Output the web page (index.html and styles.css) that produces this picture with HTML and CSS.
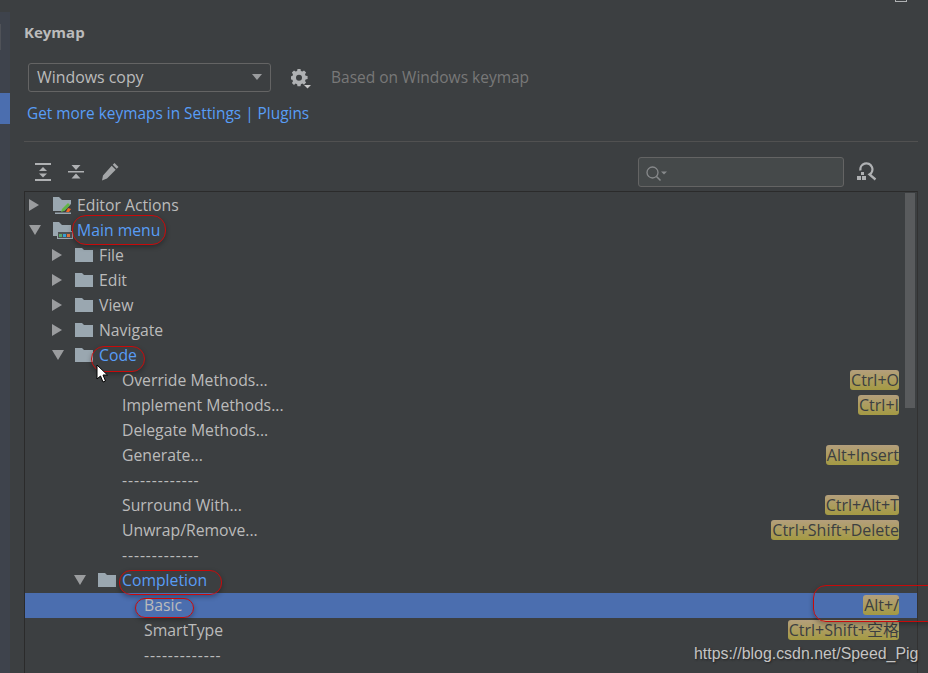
FILE: index.html
```html
<!DOCTYPE html>
<html lang="en">
<head>
<meta charset="utf-8">
<title>Keymap</title>
<link rel="stylesheet" href="styles.css">
</head>
<body>
<div class="window">
  <aside class="sidebar">
    <div class="side-mark"></div>
    <div class="side-sel"></div>
  </aside>
  <main class="panel">
    <h1 class="title">Keymap</h1>
    <div class="scheme-row">
      <div class="combo"><span>Windows copy</span><i class="combo-arrow"></i></div>
      <svg class="gear" width="20" height="20" viewBox="0 0 20 20"><path fill="#afb1b3" fill-rule="evenodd" d="M6.500 0h3l.4 2 1.500.6L13 1.500l2.100 2.100-1.100 1.600.6 1.500 2 .4v3l-2 .4-.6 1.500 1.100 1.600-2.100 2.100-1.600-1.100-1.500.6-.4 2h-3l-.4-2-1.500-.6L3 16l-2.100-2.100L2 12.300l-.6-1.500-2-.4v-3l2-.4.6-1.500L.9 3.600 3 1.500l1.600 1.100 1.500-.6zM8 5.700a3 3 0 1 0 0 6 3 3 0 0 0 0-6z"/><path fill="#c8c8c8" d="M13 16h7l-3.500 3.500z"/></svg>
      <span class="based">Based on Windows keymap</span>
    </div>
    <a class="more-link">Get more keymaps in Settings | Plugins</a>
    <hr class="rule">
    <div class="toolbar">
      <svg class="tool" width="16" height="18" viewBox="0 0 16 18"><g fill="#afb1b3"><rect y="0" width="16" height="2"/><rect y="16" width="16" height="2"/><path d="M8 4l4 4H4zM8 14.500l-4-4h8z"/></g></svg>
      <svg class="tool" width="16" height="18" viewBox="0 0 16 18"><g fill="#afb1b3"><rect y="8" width="16" height="1.500"/><path d="M8 7L3.500 2h9zM8 10.500l4.500 5h-9z"/></g></svg>
      <svg class="tool" width="18" height="18" viewBox="0 0 18 18"><path fill="#a4a6a8" d="M13.500 0l4 4-1.800 1.800-4-4zM10.700 2.800l4 4L6 15.500 1 17.500l1-5z"/></svg>
      <div class="search"><svg width="24" height="16" viewBox="0 0 24 16"><circle cx="6.500" cy="6.500" r="5.500" fill="none" stroke="#87898b" stroke-width="1.300"/><path d="M10.500 10.500l4 4" stroke="#87898b" stroke-width="1.600"/><path fill="#87898b" d="M15 5.500h6l-3 3z"/></svg></div>
      <svg class="find-shortcut" width="20" height="20" viewBox="0 0 20 20"><g fill="#afb1b3"><rect x="4" y="10" width="3" height="3"/><rect x="0" y="14" width="4" height="4"/><rect x="5" y="14" width="4" height="4"/></g><path fill="none" stroke="#afb1b3" stroke-width="2.300" d="M3.500 8.500A6 6 0 1 1 12.500 12.500L18.500 17.500"/></svg>
    </div>
    <section class="tree">
      <div class="scrollbar"></div>
      <div class="row l0"><i class="tri right"></i><svg class="fold" width="20" height="18" viewBox="0 0 20 18"><path fill="#9aa7b0" d="M0 1h6l3 3h9v4l-7 7H0z"/><path fill="#62b543" d="M8 16l1-3 6-6 2 2-6 6z"/><path fill="#f26522" d="M15 12l3 1-2 3h-3z"/><rect x="2" y="16.500" width="16" height="1.500" fill="#9aa7b0"/></svg><span>Editor Actions</span></div>
      <div class="row l0"><i class="tri down"></i><svg class="fold" width="20" height="18" viewBox="0 0 20 18"><path fill="#9aa7b0" d="M0 1h6l3 3h9v6H5v5H0z"/><rect x="4.500" y="10.500" width="15" height="7" fill="#4f5254" stroke="#9aa7b0"/><rect x="6" y="13" width="3" height="3" fill="#59a869"/><rect x="10" y="13" width="3" height="3" fill="#389fd6"/><rect x="14" y="13" width="3" height="3" fill="#e0743c"/></svg><span class="hit">Main menu</span></div>
      <div class="row l1"><i class="tri right"></i><svg class="fold" width="18" height="14" viewBox="0 0 18 14"><path fill="#9aa7b0" d="M0 0h7l2 2h9v12H0z"/></svg><span>File</span></div>
      <div class="row l1"><i class="tri right"></i><svg class="fold" width="18" height="14" viewBox="0 0 18 14"><path fill="#9aa7b0" d="M0 0h7l2 2h9v12H0z"/></svg><span>Edit</span></div>
      <div class="row l1"><i class="tri right"></i><svg class="fold" width="18" height="14" viewBox="0 0 18 14"><path fill="#9aa7b0" d="M0 0h7l2 2h9v12H0z"/></svg><span>View</span></div>
      <div class="row l1"><i class="tri right"></i><svg class="fold" width="18" height="14" viewBox="0 0 18 14"><path fill="#9aa7b0" d="M0 0h7l2 2h9v12H0z"/></svg><span>Navigate</span></div>
      <div class="row l1"><i class="tri down"></i><svg class="fold" width="18" height="14" viewBox="0 0 18 14"><path fill="#9aa7b0" d="M0 0h7l2 2h9v12H0z"/></svg><span class="hit">Code</span></div>
      <div class="row l2"><span>Override Methods...</span><kbd>Ctrl+O</kbd></div>
      <div class="row l2"><span>Implement Methods...</span><kbd>Ctrl+I</kbd></div>
      <div class="row l2"><span>Delegate Methods...</span></div>
      <div class="row l2"><span>Generate...</span><kbd>Alt+Insert</kbd></div>
      <div class="row l2"><span class="sep">-------------</span></div>
      <div class="row l2"><span>Surround With...</span><kbd>Ctrl+Alt+T</kbd></div>
      <div class="row l2"><span>Unwrap/Remove...</span><kbd>Ctrl+Shift+Delete</kbd></div>
      <div class="row l2"><span class="sep">-------------</span></div>
      <div class="row l2b"><i class="tri down"></i><svg class="fold" width="18" height="14" viewBox="0 0 18 14"><path fill="#9aa7b0" d="M0 0h7l2 2h9v12H0z"/></svg><span class="hit">Completion</span></div>
      <div class="row l3 selected"><span>Basic</span><kbd>Alt+/</kbd></div>
      <div class="row l3"><span>SmartType</span><kbd>Ctrl+Shift+空格</kbd></div>
      <div class="row l3"><span class="sep">-------------</span></div>
    </section>
  </main>
</div>
<i class="corner-mark"></i>
<i class="ring ring-main"></i>
<i class="ring ring-code"></i>
<i class="ring ring-completion"></i>
<i class="ring ring-basic"></i>
<i class="ring ring-alt"></i>
<svg class="cursor" width="14" height="20" viewBox="0 0 14 20"><path fill="#fff" stroke="#000" d="M1 1v14l3.500-3 2.500 6 2.500-1-2.500-6h4.500z"/></svg>
<span class="watermark">https://blog.csdn.net/Speed_Pig</span>
</body>
</html>
```

FILE: styles.css
```css
* { box-sizing: border-box; }
html, body { margin: 0; height: 100%; overflow: hidden; }
body { background: #3c3f41; font-family: "Open Sans", "Noto Sans CJK SC", sans-serif; color: #afb1b3; }
.window { display: flex; height: 673px; }
.sidebar { width: 10px; margin-top: 12px; background: #3e434c; flex: none; }
.side-mark { width: 1px; height: 26px; margin-top: 12px; background: #4f5258; }
.side-sel { height: 31px; margin-top: 43px; background: #4b6eaf; }
.panel { flex: 1; padding: 0 10px 0 14px; min-width: 0; }
.title { margin: 23px 0 0; font-size: 15px; line-height: 18px; font-weight: 700; color: #bbbbbb; }
.scheme-row { display: flex; align-items: center; margin: 22px 0 0 4px; height: 28px; }
.combo { width: 243px; height: 29px; padding: 0 9px 0 8px; display: flex; align-items: center; justify-content: space-between; border: 1px solid #646464; border-radius: 3px; font-size: 15.900px; color: #bbbbbb; }
.combo-arrow { width: 0; height: 0; border: 5px solid transparent; border-top: 6px solid #9a9c9e; border-bottom: 0; margin-right: -1px; }
.gear { margin-left: 20px; margin-top: 3px; }
.based { margin-left: 20px; font-size: 15.500px; color: #787878; }
.more-link { display: block; margin: 12px 0 0 3px; font-size: 15.400px; line-height: 22px; color: #589df6; }
.rule { margin: 16px 0 0; border: 0; border-top: 1px solid #515151; }
.toolbar { display: flex; align-items: center; height: 32px; margin-top: 14px; padding-left: 11px; }
.tool { margin-right: 17px; }
.search { margin-left: auto; width: 206px; height: 30px; padding: 7px 0 0 7px; background: #45494a; border: 1px solid #646464; border-radius: 3px; }
.find-shortcut { margin: 0 41px 0 13px; }
.tree { position: relative; margin-top: 3px; height: 482px; padding-top: 1px; border-top: 1px solid #2b2b2b; border-left: 1px solid #2b2b2b; border-right: 1px solid #323232; }
.scrollbar { position: absolute; top: 1px; right: 2px; width: 10px; height: 215px; background: #595b5d; z-index: 1; }
.row { display: flex; align-items: center; height: 25px; padding: 0 18px 2px 0; font-size: 15.750px; color: #bbbbbb; white-space: nowrap; }
.row span { flex: none; }
.row .sep { letter-spacing: .9px; }
.tri { flex: none; width: 0; height: 0; border-style: solid; border-color: transparent; }
.tri.right { border-width: 6px 0 6px 10px; border-left-color: #9a9c9e; margin: 0 2px 0 0; }
.tri.down { border-width: 10px 6px 0 6px; border-top-color: #9a9c9e; margin: 0; }
.l0 { padding-left: 4px; }
.l0 .fold { margin: 0 4px 0 12px; }
.l1 { padding-left: 27px; }
.l1 .fold { margin: 0 6px 0 11px; }
.l2 { padding-left: 97px; }
.l2b { padding-left: 49px; }
.l2b .fold { margin: 0 6px 0 12px; }
.l3 { padding-left: 119px; }
.hit { color: #589df6; }
.selected { background: #4b6eaf; }
kbd { margin-left: auto; height: 20px; padding: 0 0 0 1px; font: inherit; font-size: 16px; line-height: 20px; color: #3c3f41; background: linear-gradient(#b49f7c, #a49a43); border-radius: 3px; }
.corner-mark { position: absolute; left: 895px; top: 0; width: 12px; height: 2px; border: solid #afb1b3; border-width: 0 1px 1px; }
.ring { position: absolute; border: 1.500px solid #c80a0a; box-shadow: 0 2px 5px rgba(0,0,0,.3); }
.ring-main { left: 72px; top: 215px; width: 94px; height: 30px; border-radius: 14px; }
.ring-code { left: 91px; top: 346px; width: 54px; height: 26px; border-radius: 13px; }
.ring-completion { left: 119px; top: 570px; width: 103px; height: 25px; border-radius: 12px; }
.ring-basic { left: 135px; top: 598px; width: 59px; height: 20px; border-radius: 10px; }
.ring-alt { left: 813px; top: 585px; width: 160px; height: 37px; border-radius: 13px; }
.cursor { position: absolute; left: 96px; top: 364px; }
.watermark { position: absolute; left: 694px; top: 644px; font: 15.900px/20px "Liberation Sans", sans-serif; color: #c4c4c4; text-shadow: 1px 1px 2px #222; }
```
